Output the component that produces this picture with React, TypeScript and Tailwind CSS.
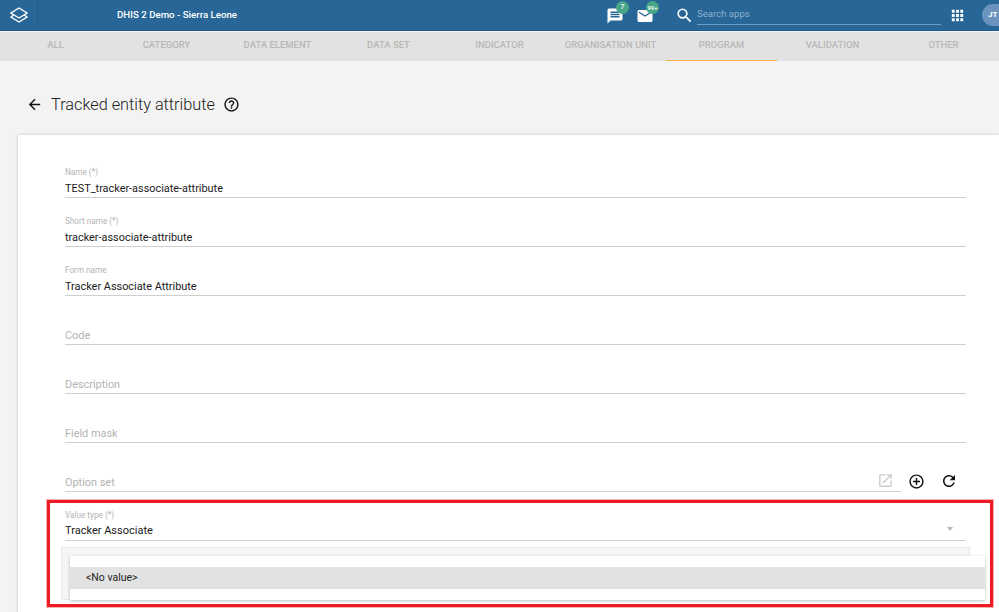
import React from "react";
import { MdAddCircleOutline, MdApps, MdArrowBack, MdEmail, MdHelpOutline, MdMessage, MdOpenInNew, MdRefresh, MdSearch } from "react-icons/md";

const tabs = ["All", "Category", "Data element", "Data set", "Indicator", "Organisation unit", "Program", "Validation", "Other"];

const Field = ({ label, value, children }: { label: string; value?: string; children?: React.ReactNode }) => (
  <div className={`h-[49px] mr-[33px] border-b border-[#cfcfcf] relative flex flex-col justify-end ${children ? "pb-[1px]" : ""}`}>
    {value ? (
      <>
        <span className="text-[8.2px] leading-[11px] text-[#b3b3b3]">{label}</span>
        <span className={`leading-[16px] text-[#1a1a1a] ${children ? "mt-[2px] text-[11px]" : "mt-[3px] text-[10.9px]"}`}>{value}</span>
      </>
    ) : (
      <span className="text-[10.9px] leading-[16px] text-[#b3b3b3]">{label}</span>
    )}
    {children}
  </div>
);

const Logo = () => (
  <svg width="18" height="16" viewBox="0 0 18 16" fill="none" stroke="white" strokeWidth="1.4">
    <path d="M9 1 L17 6 L9 11 L1 6 Z" />
    <path d="M3.5 8 L1 10 L9 15 L17 10 L14.5 8" />
  </svg>
);

const Header = () => (
  <div className="h-[31px] bg-[#276696] border-b border-[#1d5a8a] flex items-center text-white">
    <div className="w-[38px] h-full flex items-center justify-center border-r border-[#245f8c]">
      <Logo />
    </div>
    <span className="ml-[79px] text-[9.7px] font-medium">DHIS 2 Demo - Sierra Leone</span>
    <div className="ml-auto h-full flex items-center">
      <div className="relative mt-[2px]">
        <MdMessage size={18} />
        <span className="absolute -top-[6px] left-[10px] w-[13px] h-[13px] rounded-full bg-[#48a688] text-[7px] font-medium flex items-center justify-center">7</span>
      </div>
      <div className="relative ml-[12px] mt-[2px]">
        <MdEmail size={18} />
        <span className="absolute -top-[6px] left-[10px] w-[13px] h-[13px] rounded-full bg-[#48a688] text-[6px] font-medium flex items-center justify-center">99+</span>
      </div>
      <MdSearch size={19} className="ml-[21px]" />
      <div className="ml-[3px] w-[244px] h-[22px] self-start mt-[3px] border-b border-[#6f9cc0] text-[9.6px] leading-[22px] text-[#8db1cf]">Search apps</div>
      <MdApps size={17} className="ml-[8px]" />
      <div className="ml-[16px] w-[17px] h-[22px] rounded-l-full bg-[#6a94bd] text-[8px] font-bold flex items-center pl-[6px]">JT</div>
    </div>
  </div>
);

export default function App() {
  return (
    <div className="relative h-[612px] overflow-hidden bg-[#f3f3f3] font-['Roboto',sans-serif]">
      <Header />
      <div className="mt-px grid grid-cols-9 h-[29px] bg-[#e2e2e2]">
        {tabs.map((t) => (
          <div
            key={t}
            className={`flex items-center justify-center pb-[2px] text-[9.5px] font-medium uppercase text-[#b8b8b8] ${t === "Program" ? "border-b border-b-[#f7b24a]" : ""}`}
          >
            {t}
          </div>
        ))}
      </div>

      <div className="h-[74px] flex items-center pl-[26px] pt-[12px]">
        <MdArrowBack size={17} className="text-[#111]" />
        <span className="ml-[8px] pt-[2px] text-[16.3px] font-light text-[#222]">Tracked entity attribute</span>
        <MdHelpOutline size={17} className="ml-[8px] text-[#111]" />
      </div>

      <div className="ml-[18px] h-[480px] bg-white shadow-[0_0_3px_rgba(0,0,0,0.2)] pl-[47px] pt-[14px]">
        <Field label="Name (*)" value="TEST_tracker-associate-attribute" />
        <Field label="Short name (*)" value="tracker-associate-attribute" />
        <Field label="Form name" value="Tracker Associate Attribute" />
        <Field label="Code" />
        <Field label="Description" />
        <Field label="Field mask" />
        <div className="flex items-end">
          <div className="flex-1">
            <div className="h-[49px] border-b border-[#cfcfcf] relative flex flex-col justify-end">
              <span className="text-[10.9px] leading-[16px] text-[#b3b3b3]">Option set</span>
              <MdOpenInNew size={17} className="absolute right-[7px] bottom-[2px] text-[#cccccc]" />
            </div>
          </div>
          <div className="w-[98px] h-[18px] mb-[2px] flex items-center text-[#111]">
            <MdAddCircleOutline size={17} className="ml-[7px]" />
            <MdRefresh size={18} className="ml-[15px]" />
          </div>
        </div>
        <Field label="Value type (*)" value="Tracker Associate">
          <span className="absolute right-[13px] bottom-[9px] w-0 h-0 border-x-[3px] border-x-transparent border-t-[4px] border-t-[#b8b8b8]" />
        </Field>
        <div className="mt-[6px] ml-[-4px] mr-[29px] h-[53px] bg-[#f5f5f5] border border-[#e8e8e8]" />
      </div>

      <div className="absolute left-[70px] top-[556px] w-[915px] h-[44px] bg-white shadow-[0_1px_3px_rgba(0,0,0,0.25)] pt-[11px]">
        <div className="h-[22px] bg-[#e2e2e2] pl-[16px] text-[10.5px] leading-[22px] text-[#222]">&lt;No value&gt;</div>
      </div>

      <div className="absolute left-[47px] top-[500px] w-[946px] h-[107px] border-[3px] border-[#ed1c24] shadow-[0_0_0_1px_rgba(237,28,36,0.35)]" />
    </div>
  );
}
